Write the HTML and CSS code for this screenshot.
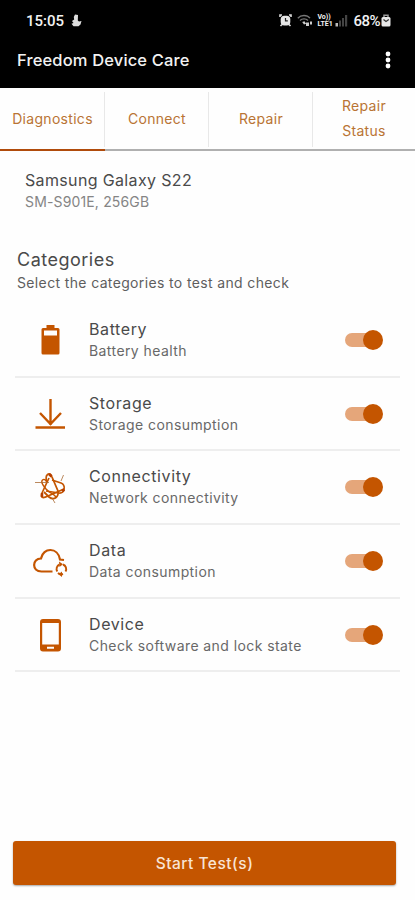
FILE: index.html
```html
<!DOCTYPE html>
<html lang="en">
<head>
  <meta charset="UTF-8">
  <meta name="viewport" content="width=device-width, initial-scale=1.0">
  <title>Freedom Device Care</title>
  <link rel="stylesheet" href="styles.css">
</head>
<body>
  <header class="header">
    <div class="status-bar">
      <span class="clock">15:05</span>
      <svg class="status-flame" width="11" height="13" viewBox="0 0 11 13">
        <path d="M4 0.5 7 1 6.8 6.5 8 7.5 10.5 7 9.5 10.5 7.5 12.3H2.5L0.5 9.8 2.5 9 1 7 3.2 5.5 2.8 3Z" fill="#ddd"/>
      </svg>
      <div class="status-icons">
        <svg width="13" height="13" viewBox="0 0 13 13">
          <path d="M1 3V1H3M10 1H12V3M1.5 12 3 10.5M11.5 12 10 10.5" fill="none" stroke="#ddd" stroke-width="1.6"/>
          <rect x="1.7" y="1.7" width="9.6" height="9.8" rx="3.5" fill="#e6e6e6"/>
          <path d="M6.5 4V6.8H8.8" fill="none" stroke="#222" stroke-width="1.2"/>
        </svg>
        <svg width="16" height="13" viewBox="0 0 16 13">
          <path d="M0.8 4.2C4 0.6 10 0.6 13 4.2M3 6.5C5 4.3 9 4.3 11 6.5" fill="none" stroke="#777" stroke-width="1.3"/>
          <path d="M5.2 8 7.5 7.2 9 9.8 7 10.5ZM9 8.5H12V12H9ZM13 7.5H15V10.5H13Z" fill="#ccc"/>
        </svg>
        <span class="volte"><span>Vo))</span><span>LTE1</span></span>
        <svg width="13" height="13" viewBox="0 0 13 13">
          <path d="M0.5 9H3V12.5H0.5Z" fill="#bbb"/>
          <path d="M4 6.5H6V12.5H4ZM7 4H9V12.5H7ZM10 1H12.2V12.5H10Z" fill="#444"/>
        </svg>
        <span class="charge">68%</span>
        <svg width="10" height="13" viewBox="0 0 10 13">
          <path d="M3 3.5V1.2H7V3.5" fill="none" stroke="#999" stroke-width="1.5"/>
          <rect x="0.5" y="3" width="9" height="9.5" rx="1.5" fill="#e8e8e8"/>
          <path d="M2.5 5.5 5 7.5 7.8 5.5" fill="none" stroke="#333" stroke-width="1.3"/>
        </svg>
      </div>
    </div>
    <div class="app-bar">
      <h1>Freedom Device Care</h1>
      <button class="menu-btn" aria-label="Menu">
        <svg width="6" height="18" viewBox="0 0 6 18" fill="#fff">
          <circle cx="3" cy="3" r="2.4"/>
          <circle cx="3" cy="9" r="2.4"/>
          <circle cx="3" cy="15" r="2.4"/>
        </svg>
      </button>
    </div>
  </header>

  <nav class="tabs">
    <a class="tab active">Diagnostics</a>
    <a class="tab">Connect</a>
    <a class="tab">Repair</a>
    <a class="tab">Repair Status</a>
  </nav>

  <main>
    <section class="device-info">
      <h2>Samsung Galaxy S22</h2>
      <p>SM-S901E, 256GB</p>
    </section>

    <section class="intro">
      <h2>Categories</h2>
      <p>Select the categories to test and check</p>
    </section>

    <ul class="category-list">
      <li class="category">
        <svg class="icon" width="36" height="36" viewBox="0 0 36 36">
          <path d="M14.5 3H22.5V6H26Q27.500 6 27.500 7.500V31Q27.500 32.500 26 32.500H11Q9.500 32.500 9.500 31V7.500Q9.500 6 11 6H14.500ZM12 8.500V13.500H25V8.500Z" fill="#c45500" fill-rule="evenodd"/>
        </svg>
        <div class="text">
          <h3>Battery</h3>
          <p>Battery health</p>
        </div>
        <span class="switch"></span>
      </li>
      <li class="category">
        <svg class="icon" width="36" height="36" viewBox="0 0 36 36" fill="none" stroke="#c45500" stroke-width="2.4">
          <path d="M18.500 3V29M8 17 18.500 28 29 17M3.500 31.500H33"/>
        </svg>
        <div class="text">
          <h3>Storage</h3>
          <p>Storage consumption</p>
        </div>
        <span class="switch"></span>
      </li>
      <li class="category">
        <svg class="icon" width="36" height="36" viewBox="0 0 36 36" fill="none" stroke="#c45500" stroke-linejoin="round">
          <path d="M15 14C12 5 18 2 20 8L26 22C27 28 22 32 17 28L12 23" stroke-width="1.800"/>
          <path d="M20 11 29 14C34 16 33 25 27 24L14 22" stroke-width="1.600"/>
          <path d="M17 9 10 24C8 30 12 29 16 27L32 20" stroke-width="1.700"/>
          <path d="M15 13C12 8 8 11 11 16L14 20C18 25 24 25 24 29" stroke-width="1.400"/>
          <path d="M3 13.500H17M29 12 31.500 6M20 29 23 34" stroke="#a96b35" stroke-width="0.800"/>
          <path d="M10 24V28M30.500 20 32 22.500M17 5 19.500 7.500" stroke="#b63d00" stroke-width="2.500"/>
        </svg>
        <div class="text">
          <h3>Connectivity</h3>
          <p>Network connectivity</p>
        </div>
        <span class="switch"></span>
      </li>
      <li class="category">
        <svg class="icon" width="36" height="36" viewBox="0 0 36 36" fill="none" stroke="#c45500" stroke-width="2.200">
          <path d="M20.500 28.500H9.500C-0.500 28.500 0 15.500 9 15.500C11 4 26 4 28 16.500L32 17"/>
          <path d="M25.300 28.500A4.800 4.800 0 0 1 27.500 21.500M31 21.500A4.800 4.800 0 0 1 33.500 28.500M26 30A4.800 4.800 0 0 0 31 31" stroke-width="1.900"/>
          <path d="M27 18.500 31 21.300 27.500 24ZM30 28.500V34L26.500 31.300Z" fill="#c45500" stroke="none"/>
        </svg>
        <div class="text">
          <h3>Data</h3>
          <p>Data consumption</p>
        </div>
        <span class="switch"></span>
      </li>
      <li class="category">
        <svg class="icon" width="36" height="36" viewBox="0 0 36 36">
          <path d="M11 2H26Q29 2 29 5V31.500Q29 34.500 26 34.500H11Q8 34.500 8 31.500V5Q8 2 11 2ZM10.200 6V27.500H26.800V6ZM15 29.700V31.700H22V29.700Z" fill="#c45500" fill-rule="evenodd"/>
        </svg>
        <div class="text">
          <h3>Device</h3>
          <p>Check software and lock state</p>
        </div>
        <span class="switch"></span>
      </li>
    </ul>
  </main>

  <footer>
    <button class="start-btn">Start Test(s)</button>
  </footer>
</body>
</html>
```

FILE: styles.css
```css
* {
  box-sizing: border-box;
}

body {
  display: flex;
  flex-direction: column;
  height: 900px;
  margin: 0;
  background-color: #fefefe;
  color: #4a4a4a;
  font-family: Inter, "Open Sans", sans-serif;
  overflow: hidden;
}

h1, h2, h3, p, ul {
  margin: 0;
  padding: 0;
  font-weight: 400;
}

.header {
  height: 88px;
  background-color: #000;
  color: #f2f2f2;
}

.status-bar {
  display: flex;
  align-items: center;
  height: 41px;
  padding: 0 24px 0 26px;
  font-family: Roboto, sans-serif;
  font-size: 15px;
  font-weight: 500;
}

.status-flame {
  margin-left: 7px;
}

.status-icons {
  display: flex;
  align-items: center;
  margin-left: auto;
}

.status-icons svg + svg {
  margin-left: 5px;
}

.volte {
  display: flex;
  flex-direction: column;
  width: 15px;
  margin: 0 3px 0 4px;
  font-size: 7px;
  font-weight: 700;
  line-height: 7px;
}

.charge {
  margin: 0 1px 0 5px;
  font-size: 15px;
  letter-spacing: -0.5px;
}

.app-bar {
  display: flex;
  align-items: center;
  justify-content: space-between;
  height: 38px;
  padding: 0 24px 0 17px;
}

.app-bar h1 {
  font-size: 16.5px;
  font-weight: 500;
  letter-spacing: 0.15px;
}

.menu-btn {
  display: flex;
  padding: 0;
  border: none;
  background: none;
}

.tabs {
  display: grid;
  grid-template-columns: 105px 104px 104px 1fr;
  height: 63px;
}

.tab {
  display: flex;
  align-items: center;
  justify-content: center;
  padding: 0 24px 1px;
  border-bottom: 2px solid #b0b0b0;
  background: linear-gradient(#e8e8e8, #e8e8e8) right 4px / 1px 55px no-repeat;
  color: #b97434;
  font-size: 14px;
  line-height: 25px;
  letter-spacing: 0.3px;
  text-align: center;
}

.tab:last-child {
  background: none;
}

.tab.active {
  padding: 0 0 1px;
  border-bottom-color: #b04b0b;
}

.device-info {
  padding: 18px 25px 0;
}

.device-info h2 {
  font-size: 16px;
  line-height: 22px;
  letter-spacing: 0.35px;
}

.device-info p {
  color: #858585;
  font-size: 14px;
  line-height: 21px;
  letter-spacing: 0.15px;
}

.intro {
  padding: 35px 17px 0;
}

.intro h2 {
  font-size: 18px;
  line-height: 26px;
  letter-spacing: 0.5px;
}

.intro p {
  color: #5e5e5e;
  font-size: 14px;
  line-height: 20px;
  letter-spacing: 0.36px;
}

.category-list {
  margin: 11px 15px 0;
  list-style: none;
}

.category {
  display: flex;
  align-items: center;
  height: 73.7px;
  padding: 0 17px;
  border-bottom: 2px solid #eee;
}

.text {
  flex: 1;
  margin-left: 21px;
}

.text h3 {
  font-size: 16px;
  line-height: 22px;
  letter-spacing: 0.6px;
}

.text p {
  color: #686868;
  font-size: 14px;
  line-height: 22px;
  letter-spacing: 0.42px;
}

.switch {
  position: relative;
  width: 38px;
  height: 14px;
  border-radius: 7px;
  background: linear-gradient(90deg, #e5a67a 75%, transparent 75%);
}

.switch::after {
  content: "";
  position: absolute;
  top: -3px;
  right: 0;
  width: 20px;
  height: 20px;
  border-radius: 50%;
  background-color: #c45500;
}

footer {
  margin-top: auto;
  padding: 0 19px 15px 13px;
}

.start-btn {
  width: 100%;
  height: 44px;
  border: none;
  border-radius: 3px;
  background-color: #c45500;
  box-shadow: 0 1px 2px rgba(0, 0, 0, 0.35);
  color: #f8e4d5;
  font-family: inherit;
  font-size: 15.5px;
  font-weight: 500;
  letter-spacing: 0.5px;
}
```
